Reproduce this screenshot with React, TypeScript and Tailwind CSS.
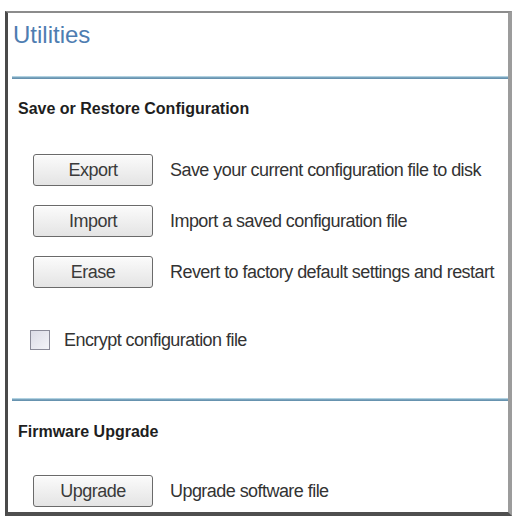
const buttons = [
  { label: "Export", text: "Save your current configuration file to disk" },
  { label: "Import", text: "Import a saved configuration file" },
  { label: "Erase", text: "Revert to factory default settings and restart" },
];

function ActionButton({ label }: { label: string }) {
  return (
    <button className="h-[32px] w-[120px] shrink-0 rounded-[3px] border border-[#6a6a6a] bg-gradient-to-b from-[#fbfbfb] to-[#e4e4e4] text-[18px] leading-none tracking-[-0.5px] text-[#3a3a3a] shadow-[inset_0_1px_0_#ffffff]">
      {label}
    </button>
  );
}

function Divider() {
  return <div className="ml-[4px] h-[3px] bg-gradient-to-b from-[#cdeaf3] via-[#7aa3bd] to-[#5d8aa8]" />;
}

export default function App() {
  return (
    <div className="h-[518px] w-[518px] bg-white pl-[5px] pt-[11px] font-['Liberation_Sans',Arial,sans-serif]">
      <div className="h-[505px] w-[507px] overflow-hidden border-b-4 border-l-[3px] border-r-4 border-t-2 border-b-[#4f4f4f] border-l-[#4a4a4a] border-r-[#9c9c9c] border-t-[#8c8c8c] bg-white">
        <div className="h-[63px] pl-[5px] pt-[8px]">
          <h1 className="text-[24px] leading-[28px] text-[#4e7db1]">Utilities</h1>
        </div>
        <Divider />

        <section className="pl-[10px]">
          <h2 className="mt-[20px] text-[16px] font-bold leading-[20px] text-[#1e1e1e]">
            Save or Restore Configuration
          </h2>
          <div className="mt-[35px] flex flex-col gap-[19px] pl-[15px]">
            {buttons.map((b) => (
              <div key={b.label} className="flex items-center gap-[17px]">
                <ActionButton label={b.label} />
                <span className="text-[18px] leading-none tracking-[-0.55px] text-[#333]">{b.text}</span>
              </div>
            ))}
          </div>
          <label className="mt-[42px] flex items-center gap-[14px] pl-[12px]">
            <span className="h-[20px] w-[20px] border border-[#8b8b98] bg-gradient-to-br from-[#dcdce6] to-[#f4f4f8]" />
            <span className="text-[18px] leading-none tracking-[-0.55px] text-[#333]">Encrypt configuration file</span>
          </label>
        </section>

        <div className="mt-[48px]">
          <Divider />
        </div>

        <section className="pl-[10px]">
          <h2 className="mt-[21px] text-[16px] font-bold leading-[20px] text-[#1e1e1e]">Firmware Upgrade</h2>
          <div className="mt-[33px] flex items-center gap-[17px] pl-[15px]">
            <ActionButton label="Upgrade" />
            <span className="text-[18px] leading-none tracking-[-0.55px] text-[#333]">Upgrade software file</span>
          </div>
        </section>
      </div>
    </div>
  );
}
